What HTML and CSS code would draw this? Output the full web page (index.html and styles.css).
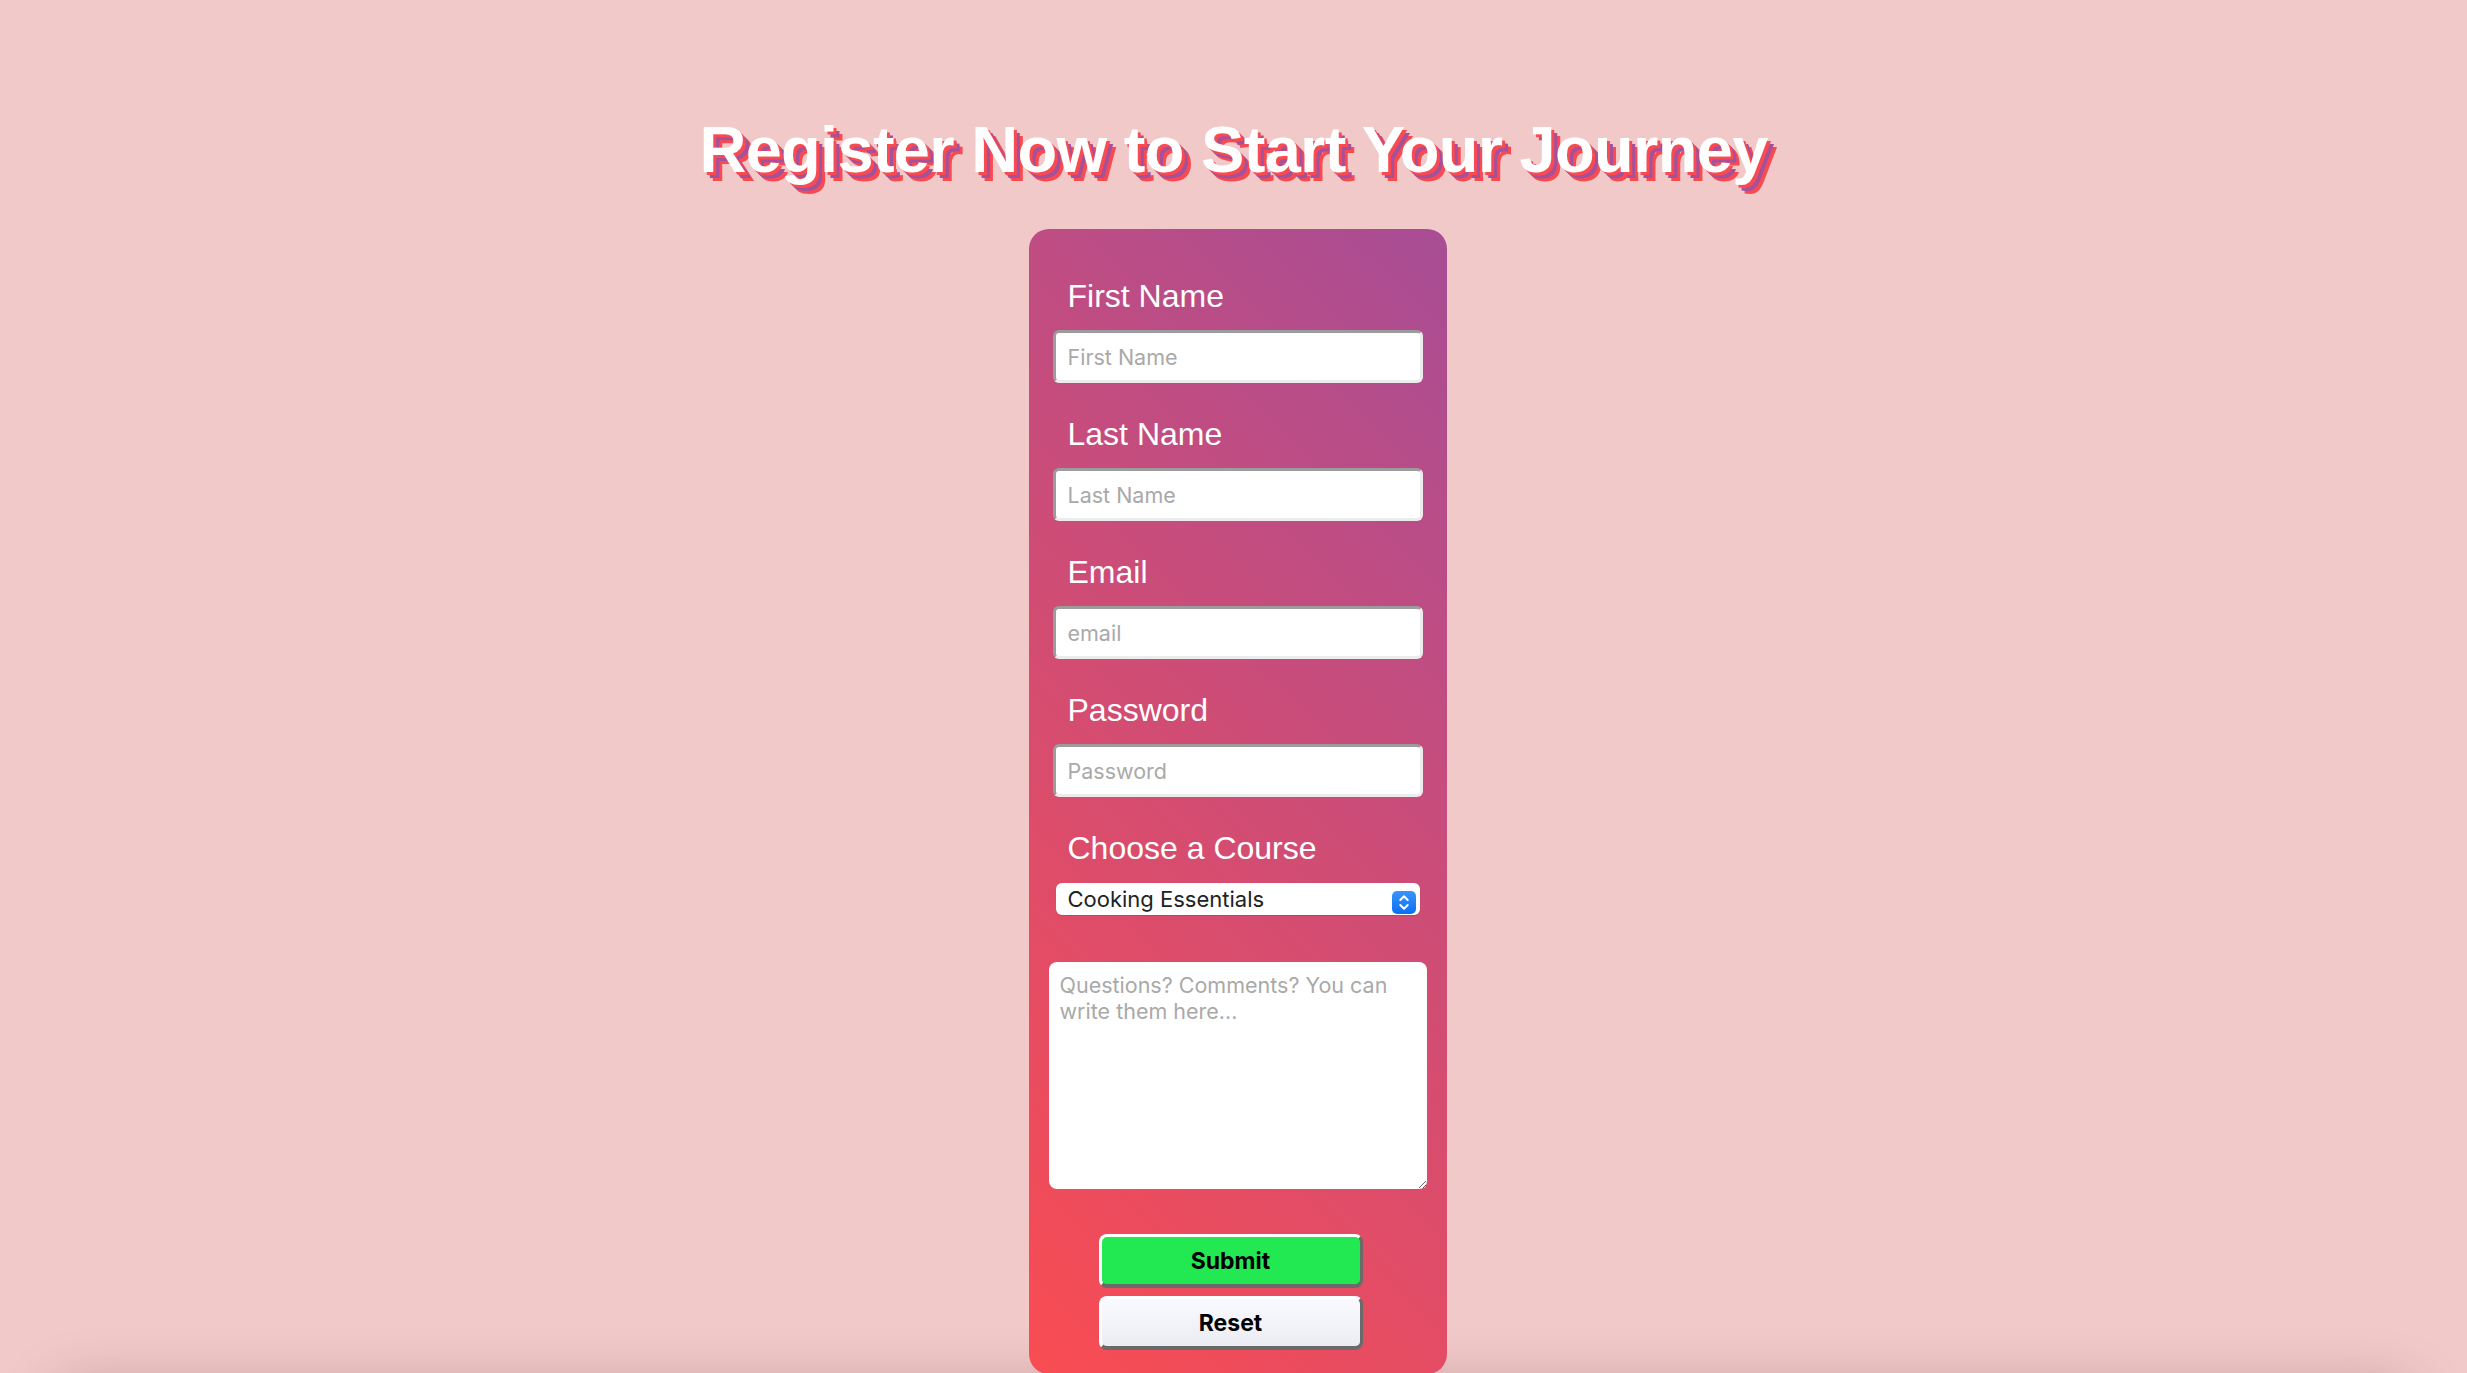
FILE: index.html
```html
<!DOCTYPE html>
<html lang="en">
<head>
<meta charset="utf-8">
<title>Register</title>
<link rel="stylesheet" href="styles.css">
</head>
<body>
<h1 class="title">Register Now to Start Your Journey</h1>
<div class="card-wrap">
  <form class="card">
    <label class="field-label" for="fn">First Name</label>
    <input class="field-input" id="fn" type="text" placeholder="First Name">
    <label class="field-label" for="ln">Last Name</label>
    <input class="field-input" id="ln" type="text" placeholder="Last Name">
    <label class="field-label" for="em">Email</label>
    <input class="field-input" id="em" type="email" placeholder="email">
    <label class="field-label" for="pw">Password</label>
    <input class="field-input" id="pw" type="password" placeholder="Password">
    <label class="field-label label-course" for="course">Choose a Course</label>
    <div class="select-wrap">
      <select class="course-select" id="course">
        <option>Cooking Essentials</option>
        <option>Baking Basics</option>
        <option>Knife Skills</option>
      </select>
      <svg class="select-arrow" width="24" height="23" viewBox="0 0 24 23" aria-hidden="true">
        <defs>
          <linearGradient id="blueg" x1="0" y1="0" x2="0" y2="1">
            <stop offset="0" stop-color="#3a94fc"/>
            <stop offset="1" stop-color="#0b6ff4"/>
          </linearGradient>
        </defs>
        <rect x="0" y="0" width="24" height="23" rx="5" fill="url(#blueg)"/>
        <path d="M8.3 9 L12 5.3 L15.7 9" fill="none" stroke="#fff" stroke-width="2" stroke-linecap="round" stroke-linejoin="round"/>
        <path d="M8.3 14 L12 17.7 L15.7 14" fill="none" stroke="#fff" stroke-width="2" stroke-linecap="round" stroke-linejoin="round"/>
      </svg>
    </div>
    <textarea class="comments" placeholder="Questions? Comments? You can write them here..."></textarea>
    <button class="btn btn-submit" type="submit">Submit</button>
    <button class="btn btn-reset" type="reset">Reset</button>
  </form>
</div>
<div class="bottom-shade"></div>
</body>
</html>
```

FILE: styles.css
```css
html, body {
  margin: 0;
  padding: 0;
}

body {
  background: #f1c9c9;
  font-family: "Liberation Sans", Arial, Helvetica, sans-serif;
  overflow: hidden;
}

.title {
  margin: 0;
  padding-top: 112px;
  text-align: center;
  font-family: "Liberation Sans", Arial, Helvetica, sans-serif;
  font-weight: 700;
  font-size: 65px;
  line-height: 75px;
  letter-spacing: -0.7px;
  color: #ffffff;
  text-shadow: 3px 3px 0 #f84b51, 6px 6px 0 #a4509b, 9px 9px 0 #f84b51;
}

.card-wrap {
  display: flex;
  justify-content: center;
  padding-left: 8px;
  margin-top: 42px;
}

.card {
  width: 418px;
  box-sizing: border-box;
  border-radius: 20px;
  background: linear-gradient(45deg, #fa4c52 0%, #a84d95 100%);
  padding: 49px 24px 24px;
  display: flex;
  flex-direction: column;
  align-items: stretch;
}

.field-label {
  display: block;
  margin: 0 0 15px 15px;
  font-size: 32px;
  line-height: 37px;
  color: #ffffff;
}

.label-course {
  margin-bottom: 16px;
}

.field-input {
  display: block;
  width: 100%;
  height: 53px;
  box-sizing: border-box;
  margin: 0 0 33px 0;
  padding: 0 12px;
  border-style: solid;
  border-width: 3px;
  border-color: #9c9c9c #ececec #ececec #9c9c9c;
  border-radius: 6px;
  background: #ffffff;
  font-family: Inter, "Noto Sans", sans-serif;
  font-size: 21.5px;
  color: #222;
  outline: none;
}

.field-input::placeholder {
  color: #a9a9a9;
}

.select-wrap {
  position: relative;
  margin: 0 3px 47px;
  height: 32px;
}

.course-select {
  -webkit-appearance: none;
  appearance: none;
  display: block;
  width: 100%;
  height: 32px;
  box-sizing: border-box;
  border: 0;
  border-radius: 6px;
  background: #ffffff;
  padding: 0 40px 0 12px;
  font-family: Inter, "Noto Sans", sans-serif;
  font-size: 22px;
  color: #222;
  box-shadow: 0 1px 1px rgba(0, 0, 0, 0.12);
  outline: none;
}

.select-arrow {
  position: absolute;
  right: 4px;
  top: 8px;
  pointer-events: none;
}

.comments {
  display: block;
  width: 378px;
  height: 227px;
  box-sizing: border-box;
  margin: 0 0 45px -4px;
  padding: 10px 11px;
  border: 0;
  border-radius: 8px;
  background: #ffffff;
  font-family: Inter, "Noto Sans", sans-serif;
  font-size: 21.5px;
  line-height: 26px;
  color: #222;
  outline: none;
}

.comments::placeholder {
  color: #a9a9a9;
}

.btn {
  display: block;
  width: 264px;
  height: 54px;
  box-sizing: border-box;
  margin: 0 0 0 46px;
  padding: 0;
  border-style: solid;
  border-width: 3px 3px 4px 3px;
  border-color: #ffffff #6a6a6a #6a6a6a #ffffff;
  border-radius: 8px;
  font-family: Inter, "Noto Sans", sans-serif;
  font-weight: 700;
  font-size: 23px;
  color: #000;
  cursor: pointer;
}

.btn-submit {
  background: #22e851;
  margin-bottom: 8px;
}

.btn-reset {
  background: linear-gradient(#f9faff, #ecedf3);
}

.bottom-shade {
  height: 120px;
  margin: 16px 60px 0;
  box-shadow: 0 0 60px rgba(60, 0, 0, 0.28);
}
```
